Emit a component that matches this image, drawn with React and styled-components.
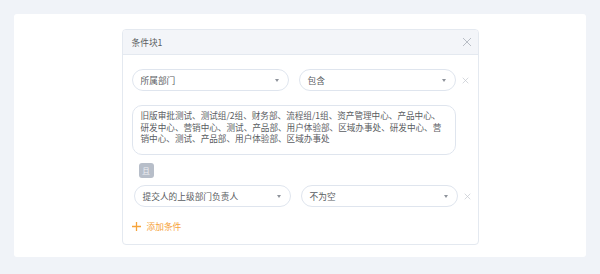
import React from 'react'
import styled, { createGlobalStyle } from 'styled-components'

const GlobalStyle = createGlobalStyle`
  html, body {
    margin: 0;
    padding: 0;
    background: #f0f3f8;
    font-family: "Noto Sans CJK SC", "Noto Sans", sans-serif;
  }
`

const Page = styled.div`
  padding: 14px;
  height: 274px;
  box-sizing: border-box;
`

const Panel = styled.div`
  background: #fff;
  border-radius: 3px;
  height: 243px;
  padding-top: 15px;
  box-sizing: border-box;
  display: flex;
  justify-content: center;
`

const Card = styled.div`
  width: 357px;
  height: 216px;
  box-sizing: border-box;
  border: 1px solid #e4e9f0;
  border-radius: 4px;
  overflow: hidden;
  display: flex;
  flex-direction: column;
`

const Header = styled.div`
  height: 24px;
  flex-shrink: 0;
  background: #f3f5f9;
  border-bottom: 1px solid #e4e9f0;
  display: flex;
  align-items: center;
  justify-content: space-between;
  padding: 0 6px 0 9px;
  font-size: 8.7px;
  color: #5a5d62;
`

const Body = styled.div`
  padding: 14px 0 0 9px;
  display: flex;
  flex-direction: column;
`

const Row = styled.div`
  display: flex;
  align-items: center;
  gap: 10px;
  padding-left: ${p => p.$shift || 0}px;
`

const Select = styled.div`
  width: 157px;
  height: 22px;
  box-sizing: border-box;
  border: 1px solid #dfe5ee;
  border-radius: 11px;
  display: flex;
  align-items: center;
  justify-content: space-between;
  padding: 0 9px 0 8px;
  font-size: 8.7px;
  color: #5a5d62;
`

const Caret = styled.span`
  width: 0;
  height: 0;
  border-left: 2.5px solid transparent;
  border-right: 2.5px solid transparent;
  border-top: 3px solid #8e939b;
`

const Remove = styled.span`
  display: flex;
  margin-left: -4px;
`

const TextBox = styled.div`
  margin-top: 14px;
  width: 324px;
  height: 50px;
  box-sizing: border-box;
  border: 1px solid #dfe5ee;
  border-radius: 10px;
  padding: 4px 10px 0 8px;
  font-size: 8.6px;
  line-height: 11.5px;
  color: #5a5d62;
  word-break: break-all;
`

const Badge = styled.div`
  margin: 8px 0 7px 7px;
  width: 15px;
  height: 15px;
  border-radius: 3px;
  background: #b7bec9;
  color: #eef0f4;
  font-size: 8px;
  display: flex;
  align-items: center;
  justify-content: center;
`

const AddLink = styled.div`
  margin-top: 13px;
  display: flex;
  align-items: center;
  gap: 6px;
  color: #f6a33a;
  font-size: 8.7px;
`

const Cross = ({ size, color }) => (
  <svg width={size} height={size} viewBox="0 0 10 10">
    <path d="M1 1L9 9M9 1L1 9" stroke={color} strokeWidth="1" />
  </svg>
)

const Plus = () => (
  <svg width="9" height="9" viewBox="0 0 9 9">
    <path d="M4.5 0V9M0 4.5H9" stroke="#f6a33a" strokeWidth="1.3" />
  </svg>
)

const text = '旧版审批测试、测试组/2组、财务部、流程组/1组、资产管理中心、产品中心、研发中心、营销中心、测试、产品部、用户体验部、区域办事处、研发中心、营销中心、测试、产品部、用户体验部、区域办事处'

const App = () => (
  <Page>
    <GlobalStyle />
    <Panel>
      <Card>
        <Header>
          <span>条件块1</span>
          <Cross size={10} color="#b9bec6" />
        </Header>
        <Body>
          <Row>
            <Select><span>所属部门</span><Caret /></Select>
            <Select><span>包含</span><Caret /></Select>
            <Remove><Cross size={7} color="#c3c7ce" /></Remove>
          </Row>
          <TextBox>{text}</TextBox>
          <Badge>且</Badge>
          <Row $shift={2}>
            <Select><span>提交人的上级部门负责人</span><Caret /></Select>
            <Select><span>不为空</span><Caret /></Select>
            <Remove><Cross size={7} color="#c3c7ce" /></Remove>
          </Row>
          <AddLink><Plus /><span>添加条件</span></AddLink>
        </Body>
      </Card>
    </Panel>
  </Page>
)

export default App
